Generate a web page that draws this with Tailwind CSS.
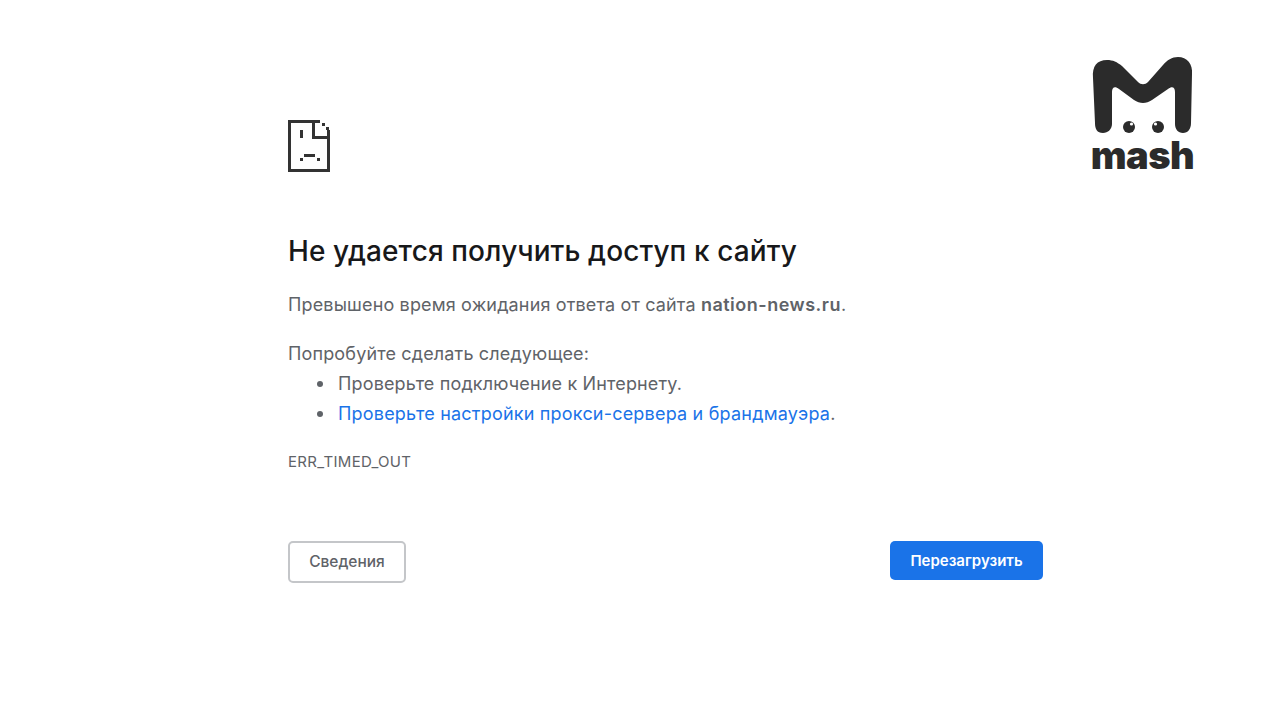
<!doctype html>
<html lang="ru">
<head>
  <meta charset="utf-8" />
  <title>Не удается получить доступ к сайту</title>
  <script src="https://cdn.jsdelivr.net/npm/@tailwindcss/browser@4"></script>
</head>
<body class="bg-white h-[720px] overflow-hidden font-['Inter',sans-serif] relative">
  <!-- logo -->
  <div class="absolute left-[1092px] top-[56px] w-[101px] flex flex-col items-center">
    <svg width="101" height="84" viewBox="0 0 101 84">
      <path d="M11 77 C5 77 3 73 3 67 L1 22 C0 10 5 4 15 4 C21 4 25 6 30 10 L46 26 C49 29 53 29 56 26 L71 9 C75 4 80 1 86 1 C95 1 101 8 100 18 L99 67 C99 73 96 77 91 77 C86 77 83 73 83 68 L83 36 C83 31 80 30 76 33 L60 44 C54 48 48 48 42 44 L27 33 C23 30 20 31 20 36 L20 68 C20 73 16 77 11 77 Z" fill="#2b2b2b"/>
      <circle cx="37" cy="71" r="6" fill="#2b2b2b"/>
      <circle cx="66" cy="71" r="6" fill="#2b2b2b"/>
      <circle cx="39.5" cy="68" r="1.6" fill="#fff"/>
      <circle cx="63.5" cy="68" r="1.6" fill="#fff"/>
    </svg>
    <span class="text-[38px] leading-[30px] font-black text-[#2b2b2b] tracking-[-0.5px]">mash</span>
  </div>

  <main class="w-[755px] ml-[288px] pt-[120px] flex flex-col">
    <!-- sad file -->
    <svg width="42" height="52" viewBox="0 0 42 52" shape-rendering="crispEdges" class="block">
      <path d="M0 0H32V3H3V49H39V10H42V52H0Z" fill="#333"/>
      <path d="M24 3H27V16H39V19H24Z" fill="#333"/>
      <rect x="34" y="3" width="3" height="3" fill="#333"/>
      <rect x="38" y="7" width="3" height="3" fill="#333"/>
      <rect x="12" y="10" width="3" height="8" fill="#333"/>
      <rect x="16" y="34" width="11" height="3" fill="#333"/>
      <rect x="12" y="38" width="3" height="3" fill="#333"/>
      <rect x="29" y="38" width="3" height="3" fill="#333"/>
    </svg>

    <h1 class="mt-[61px] text-[28px] leading-[36px] font-medium tracking-[0.1px] text-[#17181a]">Не удается получить доступ к сайту</h1>
    <p class="mt-[24px] text-[18px] leading-[24px] tracking-[0.15px] text-[#5f6368]">Превышено время ожидания ответа от сайта <b class="font-semibold tracking-[0.5px]">nation-news.ru</b>.</p>
    <p class="mt-[25px] text-[18px] leading-[24px] tracking-[0.15px] text-[#5f6368]">Попробуйте сделать следующее:</p>
    <ul class="mt-[6px] pl-[29px] flex flex-col gap-[6px] text-[18px] leading-[24px] tracking-[0.15px] text-[#5f6368]">
      <li class="flex items-center gap-[15px]"><span class="w-[6px] h-[6px] rounded-full bg-[#5f6368]"></span>Проверьте подключение к Интернету.</li>
      <li class="flex items-center gap-[15px]"><span class="w-[6px] h-[6px] rounded-full bg-[#5f6368]"></span><span><a href="#" class="text-[#1a73e8] tracking-[0.2px]">Проверьте настройки прокси-сервера и брандмауэра</a>.</span></li>
    </ul>
    <div class="mt-[26px] text-[15px] leading-[20px] tracking-[0.3px] text-[#5f6368]">ERR_TIMED_OUT</div>

    <div class="mt-[69px] flex items-start justify-between">
      <button class="w-[118px] h-[42px] rounded-[5px] border-2 border-[#c4c6c9] bg-white text-[15.5px] font-medium text-[#5f6368]">Сведения</button>
      <button class="w-[153px] h-[39px] pt-[1px] rounded-[5px] bg-[#1a73e8] text-[15px] font-semibold text-white">Перезагрузить</button>
    </div>
  </main>
</body>
</html>
